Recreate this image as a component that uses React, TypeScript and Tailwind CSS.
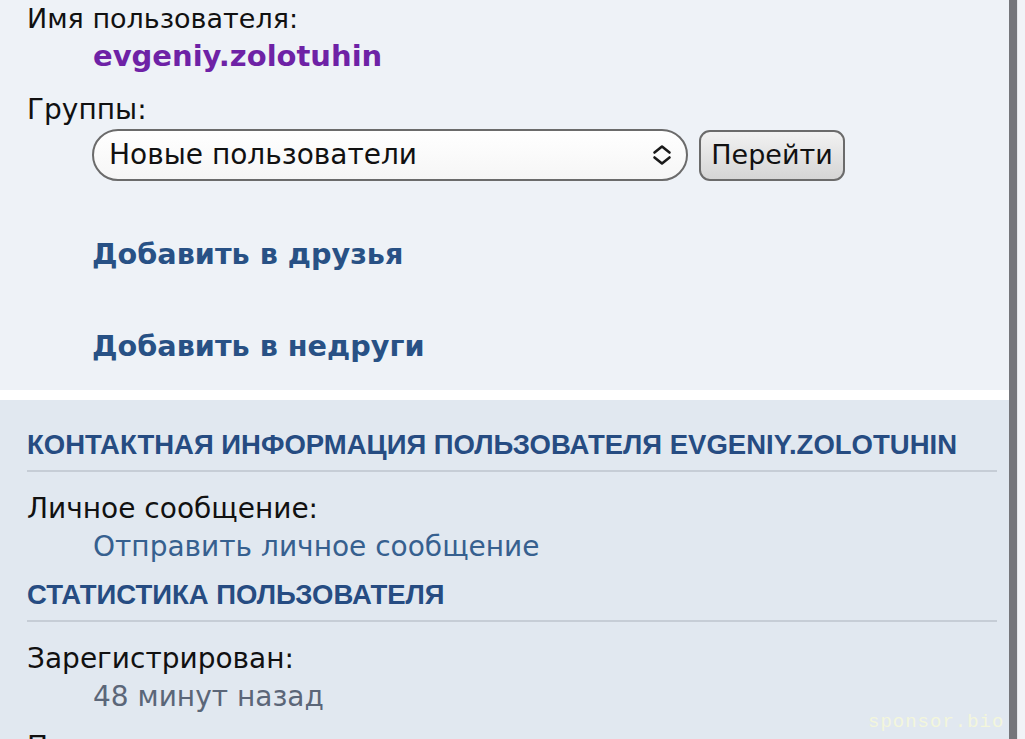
const body = "font-['DejaVu_Sans',Verdana,sans-serif]"
const head = "font-['Liberation_Sans',Arial,sans-serif]"

function Label({ children, className = 'text-[28px]' }: { children: React.ReactNode; className?: string }) {
  return <div className={`shrink-0 h-[38px] flex items-center text-[#111] ${className}`}>{children}</div>
}

function Value({ children, className = '' }: { children: React.ReactNode; className?: string }) {
  return <div className={`shrink-0 h-[38px] flex items-center pl-[66px] ${className}`}>{children}</div>
}

function SectionTitle({ children }: { children: React.ReactNode }) {
  return (
    <div className="shrink-0">
      <div className={`${head} h-[36px] flex items-center text-[27.5px] font-bold uppercase text-[#264c82] whitespace-nowrap`}>
        {children}
      </div>
      <div className="mt-[7px] h-[2px] bg-[#c6cdd6]" />
    </div>
  )
}

function SelectArrows() {
  return (
    <svg width="20" height="22" viewBox="0 0 20 22" fill="none" stroke="#1a1a1a" strokeWidth="2.6" strokeLinecap="round" strokeLinejoin="round">
      <polyline points="2.5,8.5 10,2.5 17.5,8.5" />
      <polyline points="2.5,13.5 10,19.5 17.5,13.5" />
    </svg>
  )
}

export default function App() {
  return (
    <div className={`${body} w-[1025px] h-[739px] overflow-hidden flex bg-[#eef2f7] relative`}>
      <div className="flex-1 flex flex-col">
        {/* top block */}
        <div className="shrink-0 bg-[#eef2f7] pl-[27px] pr-[12px] pb-[24px]">
          <Label className="text-[27px]">Имя пользователя:</Label>
          <Value className="text-[29px] font-bold text-[#6e22a6]">evgeniy.zolotuhin</Value>

          <div className="mt-[15px]">
            <Label>Группы:</Label>
          </div>
          <div className="flex items-center pl-[65px] gap-[11px]">
            <div className="w-[596px] h-[52px] rounded-full border-2 border-[#6b6b6b] bg-gradient-to-b from-white to-[#f6f6f6] flex items-center pl-[15px] pr-[14px] justify-between">
              <span className="text-[28px] text-[#111]">Новые пользователи</span>
              <SelectArrows />
            </div>
            <button className="w-[146px] h-[51px] rounded-[11px] border-2 border-[#6b6b6b] bg-gradient-to-b from-[#f2f2f2] to-[#d5d5d5] text-[27px] text-[#111] flex items-center justify-center">
              Перейти
            </button>
          </div>

          <div className="mt-[55px] h-[38px] flex items-center pl-[65px] text-[28.7px] font-bold text-[#285185]">
            Добавить в друзья
          </div>
          <div className="mt-[54px] h-[38px] flex items-center pl-[65px] text-[28.7px] font-bold text-[#285185]">
            Добавить в недруги
          </div>
        </div>

        <div className="shrink-0 h-[10px] bg-white" />

        {/* lower block */}
        <div className="shrink-0 flex-1 bg-[#e1e8f0] pl-[27px] pr-[12px] pt-[27px]">
          <SectionTitle>Контактная информация пользователя evgeniy.zolotuhin</SectionTitle>
          <div className="mt-[18px]">
            <Label>Личное сообщение:</Label>
            <Value className="text-[28px] text-[#36608f]">Отправить личное сообщение</Value>
          </div>

          <div className="mt-[11px]">
            <SectionTitle>Статистика пользователя</SectionTitle>
          </div>
          <div className="mt-[18px]">
            <Label>Зарегистрирован:</Label>
            <Value className="text-[28px] text-[#5b6678]">48 минут назад</Value>
          </div>
          <div className="mt-[12px]">
            <Label>Последнее посещение:</Label>
          </div>
        </div>
      </div>

      {/* scrollbar strip */}
      <div className="shrink-0 w-[8px] bg-[#75767b]" />
      <div className="shrink-0 w-[8px] bg-[#f1f3f7] border-l border-[#e4e6ea]" />

      <div className="absolute left-[868px] top-[708px] font-['Liberation_Mono',monospace] text-[19px] text-[#f3f6dc] tracking-[1px]">
        sponsor.bio
      </div>
    </div>
  )
}
